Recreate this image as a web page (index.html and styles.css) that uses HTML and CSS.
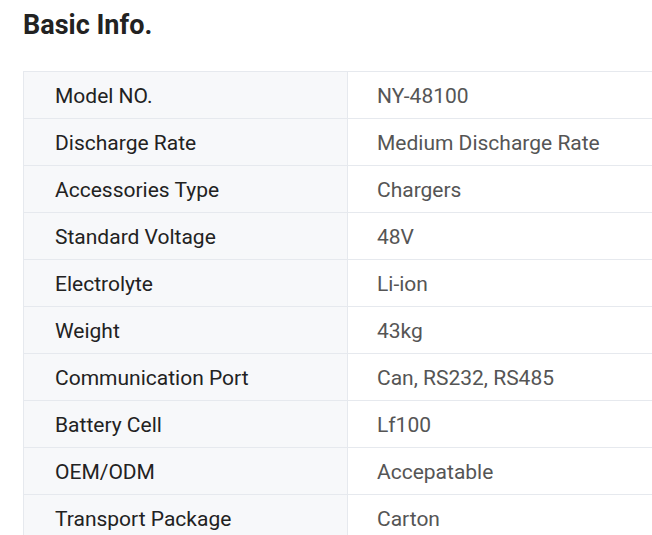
FILE: index.html
```html
<!DOCTYPE html>
<html>
<head>
<meta charset="utf-8">
<link rel="stylesheet" href="styles.css">
</head>
<body>
<div class="page">
  <h2 class="title">Basic Info.</h2>
  <table class="info">
    <tr><td class="k">Model NO.</td><td class="v">NY-48100</td></tr>
    <tr><td class="k">Discharge Rate</td><td class="v">Medium Discharge Rate</td></tr>
    <tr><td class="k">Accessories Type</td><td class="v">Chargers</td></tr>
    <tr><td class="k">Standard Voltage</td><td class="v">48V</td></tr>
    <tr><td class="k">Electrolyte</td><td class="v">Li-ion</td></tr>
    <tr><td class="k">Weight</td><td class="v">43kg</td></tr>
    <tr><td class="k">Communication Port</td><td class="v">Can, RS232, RS485</td></tr>
    <tr><td class="k">Battery Cell</td><td class="v">Lf100</td></tr>
    <tr><td class="k">OEM/ODM</td><td class="v">Accepatable</td></tr>
    <tr><td class="k">Transport Package</td><td class="v">Carton</td></tr>
  </table>
</div>
</body>
</html>
```
FILE: styles.css
```css
html, body {
  margin: 0;
  padding: 0;
  background: #fff;
  overflow: hidden;
}
.page {
  padding: 9px 0 0 23px;
  font-family: Roboto, "Liberation Sans", sans-serif;
}
.title {
  margin: 0 0 30px 0;
  font-size: 27px;
  line-height: 32px;
  font-weight: 700;
  color: #222;
}
.info {
  border-collapse: collapse;
  width: 629px;
  border-left: 1px solid #e6e9ee;
}
.info td {
  height: 44px;
  padding: 2px 0 0 0;
  font-size: 21px;
  border-top: 1px solid #e6e9ee;
  border-bottom: 1px solid #e6e9ee;
  vertical-align: middle;
}
.info .k {
  width: 292px;
  padding-left: 31px;
  background: #f7f8fa;
  color: #222;
  border-right: 1px solid #e6e9ee;
}
.info .v {
  padding-left: 29px;
  color: #555;
}
```
